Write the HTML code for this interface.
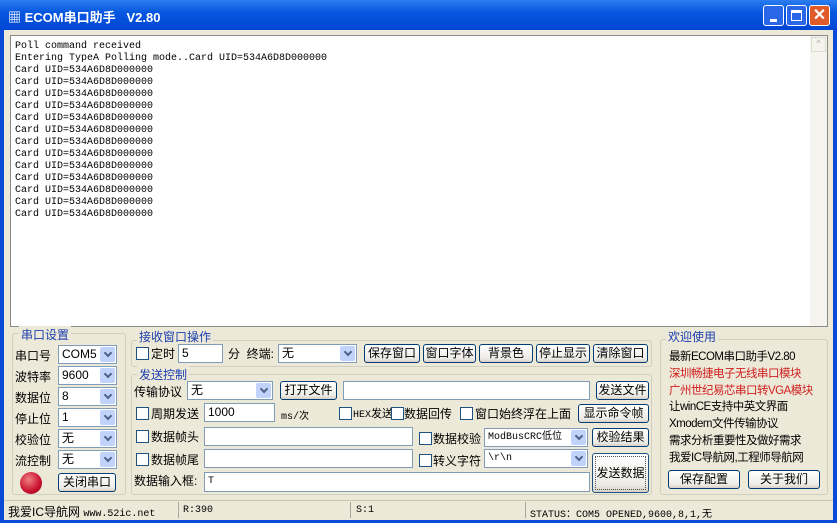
<!DOCTYPE html><html><head><meta charset="utf-8"><style>
*{box-sizing:border-box;margin:0;padding:0}
body{width:837px;height:523px;overflow:hidden;background:#0a4ad8;font-family:"Liberation Sans","Noto Sans CJK SC",sans-serif;font-size:12px;color:#000;position:relative}
.a{position:absolute;white-space:nowrap}
#title{left:0;top:0;width:837px;height:30px;background:linear-gradient(#2a7cf0,#0858e0 40%,#0046d4);}
#body{left:4px;top:30px;width:829px;height:490px;background:#ece9d8}
#log{left:10px;top:35px;width:818px;height:292px;background:#fff;border:1px solid #8a8a8a}
#log pre{font-family:"Liberation Mono",monospace;font-size:10px;line-height:12px;position:absolute;left:4px;top:5px}
.sb{left:810px;top:36px;width:17px;height:290px;background:#f4f3ee}
.grp{border:1px solid #d0d0bf;border-radius:3px}
.gt{color:#1c3fb0;background:#ece9d8;padding:0 2px}
.inp{background:#fff;border:1px solid #7f9db9;height:19px;padding-left:3px;line-height:17px;font-size:12px}
.sel{background:#fff;border:1px solid #7f9db9;height:19px;padding-left:3px;line-height:17px}
.sel:after{content:"";position:absolute;right:1px;top:1px;width:15px;height:15px;background:#c1d3fb;border-radius:2px}
.sel i{position:absolute;right:5px;top:4px;width:6px;height:6px;border-right:2px solid #4d6185;border-bottom:2px solid #4d6185;transform:rotate(45deg);z-index:2}
.btn{background:linear-gradient(#fff,#ecebe6 80%,#d6d0c5);border:1px solid #003c74;border-radius:3px;text-align:center;line-height:16px;height:19px}
.cb{width:13px;height:13px;border:1px solid #1c5180;background:#fff}
.mono{font-family:"Liberation Mono",monospace;font-size:10px}
</style></head><body>
<div id="title" class="a"></div>
<div class="a" style="left:8px;top:7px;color:#fff;font-weight:bold;font-size:13px">▦ ECOM串口助手&nbsp;&nbsp;&nbsp;V2.80</div>
<div class="a" style="left:763px;top:5px;width:21px;height:21px;border:1px solid #fff;border-radius:3px;background:#2a66e8"><div class="a" style="left:6px;top:13px;width:7px;height:3px;background:#fff"></div></div>
<div class="a" style="left:786px;top:5px;width:21px;height:21px;border:1px solid #fff;border-radius:3px;background:#2a66e8"><div class="a" style="left:4px;top:4px;width:11px;height:11px;border:1px solid #fff;border-top:3px solid #fff"></div></div>
<div class="a" style="left:809px;top:5px;width:21px;height:21px;border:1px solid #fff;border-radius:3px;background:#e05a2a;color:#fff;font-weight:bold;font-size:16px;text-align:center;line-height:19px">✕</div>
<div id="body" class="a"></div>
<div id="log" class="a"><pre>Poll command received
Entering TypeA Polling mode..Card UID=534A6D8D000000
Card UID=534A6D8D000000
Card UID=534A6D8D000000
Card UID=534A6D8D000000
Card UID=534A6D8D000000
Card UID=534A6D8D000000
Card UID=534A6D8D000000
Card UID=534A6D8D000000
Card UID=534A6D8D000000
Card UID=534A6D8D000000
Card UID=534A6D8D000000
Card UID=534A6D8D000000
Card UID=534A6D8D000000
Card UID=534A6D8D000000</pre></div>
<div class="a sb"><div class="a" style="left:1px;top:1px;width:15px;height:15px;border:1px solid #dcdcd0;color:#aaa;font-size:9px;text-align:center">^</div></div>

<div class="a grp" style="left:12px;top:333px;width:114px;height:162px"></div>
<div class="a gt" style="left:19px;top:326px">串口设置</div>
<div class="a" style="left:15px;top:346px;line-height:21px">串口号<br>波特率<br>数据位<br>停止位<br>校验位<br>流控制</div>
<div class="a sel" style="left:58px;top:345px;width:59px">COM5<i></i></div>
<div class="a sel" style="left:58px;top:366px;width:59px">9600<i></i></div>
<div class="a sel" style="left:58px;top:387px;width:59px">8<i></i></div>
<div class="a sel" style="left:58px;top:408px;width:59px">1<i></i></div>
<div class="a sel" style="left:58px;top:429px;width:59px">无<i></i></div>
<div class="a sel" style="left:58px;top:450px;width:59px">无<i></i></div>
<div class="a" style="left:20px;top:472px;width:22px;height:22px;border-radius:50%;background:radial-gradient(circle at 40% 35%,#f08080,#c8102e 60%,#8a0a1a)"></div>
<div class="a btn" style="left:58px;top:473px;width:58px">关闭串口</div>

<div class="a grp" style="left:131px;top:340px;width:521px;height:27px"></div>
<div class="a gt" style="left:137px;top:328px">接收窗口操作</div>
<div class="a cb" style="left:136px;top:347px"></div><div class="a" style="left:151px;top:345px">定时</div>
<div class="a inp" style="left:178px;top:344px;width:45px">5</div>
<div class="a" style="left:228px;top:345px">分&nbsp;&nbsp;终端:</div>
<div class="a sel" style="left:278px;top:344px;width:79px">无<i></i></div>
<div class="a btn" style="left:364px;top:344px;width:56px">保存窗口</div>
<div class="a btn" style="left:423px;top:344px;width:53px">窗口字体</div>
<div class="a btn" style="left:479px;top:344px;width:54px">背景色</div>
<div class="a btn" style="left:536px;top:344px;width:54px">停止显示</div>
<div class="a btn" style="left:593px;top:344px;width:55px">清除窗口</div>

<div class="a grp" style="left:131px;top:374px;width:521px;height:121px"></div>
<div class="a gt" style="left:137px;top:366px">发送控制</div>
<div class="a" style="left:134px;top:383px">传输协议</div>
<div class="a sel" style="left:187px;top:381px;width:86px">无<i></i></div>
<div class="a btn" style="left:280px;top:381px;width:57px">打开文件</div>
<div class="a inp" style="left:343px;top:381px;width:247px"></div>
<div class="a btn" style="left:596px;top:381px;width:53px">发送文件</div>

<div class="a cb" style="left:136px;top:407px"></div><div class="a" style="left:151px;top:405px">周期发送</div>
<div class="a inp" style="left:204px;top:403px;width:71px">1000</div>
<div class="a mono" style="left:281px;top:407px">ms/次</div>
<div class="a cb" style="left:339px;top:407px"></div><div class="a" style="left:353px;top:405px;font-size:11px"><span class="mono">HEX</span>发送</div>
<div class="a cb" style="left:391px;top:407px"></div><div class="a" style="left:404px;top:405px">数据回传</div>
<div class="a cb" style="left:460px;top:407px"></div><div class="a" style="left:475px;top:405px">窗口始终浮在上面</div>
<div class="a btn" style="left:578px;top:404px;width:71px">显示命令帧</div>

<div class="a cb" style="left:136px;top:430px"></div><div class="a" style="left:151px;top:428px">数据帧头</div>
<div class="a inp" style="left:204px;top:427px;width:209px"></div>
<div class="a cb" style="left:419px;top:432px"></div><div class="a" style="left:433px;top:430px">数据校验</div>
<div class="a sel mono" style="left:484px;top:428px;width:104px">ModBusCRC低位<i></i></div>
<div class="a btn" style="left:592px;top:428px;width:57px">校验结果</div>

<div class="a cb" style="left:136px;top:453px"></div><div class="a" style="left:151px;top:451px">数据帧尾</div>
<div class="a inp" style="left:204px;top:449px;width:209px"></div>
<div class="a cb" style="left:419px;top:454px"></div><div class="a" style="left:433px;top:452px">转义字符</div>
<div class="a sel mono" style="left:484px;top:449px;width:104px">\r\n<i></i></div>
<div class="a btn" style="left:592px;top:453px;width:57px;height:40px;line-height:38px;border:1px solid #1c5180;outline:1px dotted #555;outline-offset:-4px">发送数据</div>

<div class="a" style="left:134px;top:472px">数据输入框:</div>
<div class="a inp mono" style="left:204px;top:472px;width:386px;height:20px">T</div>

<div class="a grp" style="left:660px;top:339px;width:168px;height:156px"></div>
<div class="a gt" style="left:666px;top:328px">欢迎使用</div>
<div class="a" style="left:669px;top:349px;line-height:16.8px;font-size:11.5px;letter-spacing:-0.5px">最新ECOM串口助手V2.80<br><span style="color:#d02020">深圳畅捷电子无线串口模块<br>广州世纪易芯串口转VGA模块</span><br>让winCE支持中英文界面<br>Xmodem文件传输协议<br>需求分析重要性及做好需求<br>我爱IC导航网,工程师导航网</div>
<div class="a btn" style="left:668px;top:470px;width:72px">保存配置</div>
<div class="a btn" style="left:748px;top:470px;width:72px">关于我们</div>

<div class="a" style="left:4px;top:500px;width:829px;height:20px;border-top:1px solid #c8c5b5"></div>
<div class="a" style="left:178px;top:502px;width:1px;height:16px;background:#aca899"></div>
<div class="a" style="left:350px;top:502px;width:1px;height:16px;background:#aca899"></div>
<div class="a" style="left:525px;top:502px;width:1px;height:16px;background:#aca899"></div>
<div class="a" style="left:8px;top:503px">我爱IC导航网 <span class="mono">www.52ic.net</span></div>
<div class="a mono" style="left:183px;top:505px">R:390</div>
<div class="a mono" style="left:356px;top:505px">S:1</div>
<div class="a mono" style="left:530px;top:505px">STATUS：COM5 OPENED,9600,8,1,无</div>
</body></html>
